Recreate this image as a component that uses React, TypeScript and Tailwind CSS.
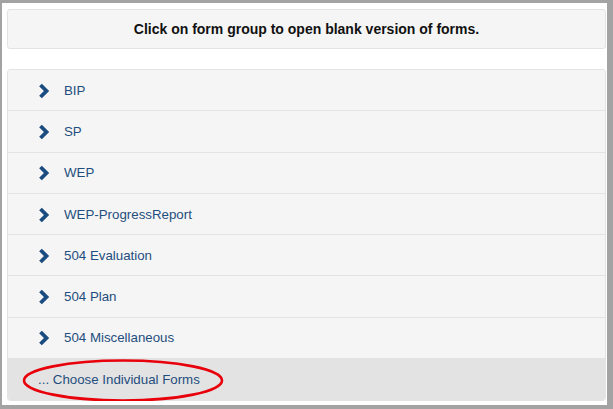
import React from 'react';

const groups = ['BIP', 'SP', 'WEP', 'WEP-ProgressReport', '504 Evaluation', '504 Plan', '504 Miscellaneous'];

function Chevron() {
  return (
    <svg width="12" height="16" viewBox="0 0 12 16" className="shrink-0" aria-hidden>
      <polyline
        points="2.5,2 8.5,8 2.5,14"
        fill="none"
        stroke="#1a4c80"
        strokeWidth="3.8"
        strokeLinecap="butt"
        strokeLinejoin="miter"
      />
    </svg>
  );
}

export default function App() {
  return (
    <div
      className="w-[613px] h-[409px] bg-white border-[#a3a3a3] border-l-2 border-t-[3px] border-r-[6px] border-b-[4px] pl-[5px] pr-[1px] pt-[6px] text-[13.3px]"
      style={{ fontFamily: '"Liberation Sans", Arial, sans-serif' }}
    >
      <div className="h-[40px] flex items-center justify-center rounded-[3px] border border-[#e3e3e3] bg-[#f5f5f5] font-bold text-[14px] text-[#111]">
        Click on form group to open blank version of forms.
      </div>
      <div className="mt-[20px] rounded-[4px] border border-[#e3e3e3] border-b-0 overflow-hidden">
        {groups.map((g) => (
          <div
            key={g}
            className="h-[41.3px] flex items-center gap-[14px] pl-[30px] pt-[1px] bg-[#f5f5f5] border-b border-[#e3e3e3] text-[#1f4e7e]"
          >
            <Chevron />
            <span>{g}</span>
          </div>
        ))}
        <div className="relative h-[42px] flex items-center pl-[30px] bg-[#e3e3e3] text-[#1f4e7e]">
          <span>... Choose Individual Forms</span>
          <svg
            className="absolute left-[14px] top-[0px]"
            width="204"
            height="44"
            viewBox="0 0 204 44"
            aria-hidden
          >
            <ellipse cx="101" cy="21.5" rx="99" ry="20" fill="none" stroke="#e8000b" strokeWidth="2.6" />
          </svg>
        </div>
      </div>
    </div>
  );
}
